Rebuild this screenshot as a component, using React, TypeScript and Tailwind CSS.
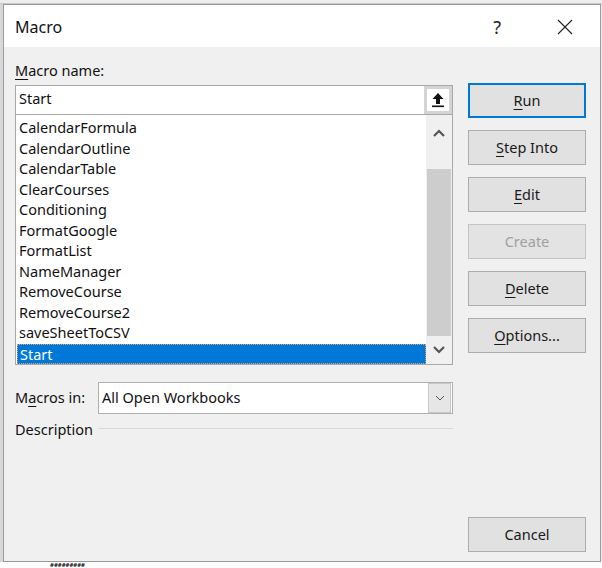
import React from "react";

const items = [
  "CalendarFormula",
  "CalendarOutline",
  "CalendarTable",
  "ClearCourses",
  "Conditioning",
  "FormatGoogle",
  "FormatList",
  "NameManager",
  "RemoveCourse",
  "RemoveCourse2",
  "saveSheetToCSV",
  "Start",
];

const font = { fontFamily: '"Noto Sans", "Open Sans", sans-serif' };

function Btn({ children, primary, disabled }: { children: React.ReactNode; primary?: boolean; disabled?: boolean }) {
  return (
    <div
      className={
        "h-[35px] w-[118px] flex items-center justify-center text-[14.5px] bg-[#e1e1e1] " +
        (primary
          ? "border-2 border-[#0078d7] text-[#1a1a1a]"
          : disabled
          ? "border border-[#c4c4c4] text-[#a0a0a0] bg-[#e3e3e3]"
          : "border border-[#adadad] text-[#1a1a1a]")
      }
    >
      {children}
    </div>
  );
}

function U({ children }: { children: React.ReactNode }) {
  return <span className="underline underline-offset-[3px] decoration-1">{children}</span>;
}

export default function App() {
  return (
    <div className="w-[602px] h-[568px] bg-[#ececec] overflow-hidden flex flex-col" style={font}>
      <div className="h-[4px] shrink-0 bg-[#eeeeee] border-b border-[#c8c8c8]" />
      <div className="flex flex-1 min-h-0">
        <div className="w-[3px] shrink-0 bg-[#d8d8d8]" />
        <div className="w-[598px] h-[558px] border border-[#9a9a9a] bg-[#f0f0f0] flex flex-col shrink-0">
          {/* title bar */}
          <div className="h-[42px] bg-white flex items-center pl-[11px] shrink-0">
            <span className="text-[16px] text-[#111] mt-[2px]">Macro</span>
            <span className="ml-auto text-[18px] text-[#222] mr-[56px] mt-[2px]">?</span>
            <svg width="16" height="16" viewBox="0 0 16 16" className="mr-[27px] mt-[1px]">
              <path d="M1 1 L15 15 M15 1 L1 15" stroke="#222" strokeWidth="1.1" />
            </svg>
          </div>
          {/* body */}
          <div className="flex flex-1 pl-[11px]">
            {/* left column */}
            <div className="w-[438px] flex flex-col">
              <div className="mt-[13px] h-[20px] text-[14.5px] text-[#111] leading-[20px]">
                <U>M</U>acro name:
              </div>
              <div className="mt-[5px] h-[30px] border border-[#a8a8a8] bg-white flex items-center">
                <span className="pl-[3px] text-[14.5px] text-[#111] flex-1 -mt-[2px]">Start</span>
                <div className="w-[28px] h-[28px] bg-[#d4d4d4] flex items-center justify-center">
                  <div className="w-[22px] h-[22px] bg-white flex items-center justify-center">
                    <svg width="14" height="16" viewBox="0 0 14 16">
                      <path d="M7 1 L1.5 7 H5 V12 H9 V7 H12.5 Z" fill="#111" />
                      <rect x="1" y="13.5" width="12" height="1.6" fill="#111" />
                    </svg>
                  </div>
                </div>
              </div>
              {/* list */}
              <div className="h-[251px] -mt-px border border-[#a8a8a8] bg-white flex">
                <div className="flex-1 pt-[3px] pl-px">
                  {items.map((it) =>
                    it === "Start" ? (
                      <div
                        key={it}
                        className="h-[20.5px] bg-[#0078d7] text-white text-[14.5px] leading-[18px] pl-[2px] border border-dotted border-[#e8a070]"
                      >
                        {it}
                      </div>
                    ) : (
                      <div key={it} className="h-[20.5px] text-[14.5px] leading-[19px] text-[#111] pl-[2px]">
                        {it}
                      </div>
                    )
                  )}
                </div>
                <div className="w-[26px] flex flex-col bg-[#f0f0f0]">
                  <div className="h-[34px] flex items-center justify-center pt-[1px]">
                    <svg width="12" height="8" viewBox="0 0 12 8">
                      <path d="M1 7 L6 2 L11 7" stroke="#555" strokeWidth="2.2" fill="none" />
                    </svg>
                  </div>
                  <div className="h-[20px]" />
                  <div className="h-[167px] mx-px bg-[#cdcdcd]" />
                  <div className="flex-1 flex items-center justify-center">
                    <svg width="12" height="8" viewBox="0 0 12 8">
                      <path d="M1 1 L6 6 L11 1" stroke="#555" strokeWidth="2.2" fill="none" />
                    </svg>
                  </div>
                </div>
              </div>
              {/* macros in */}
              <div className="mt-[17px] flex items-center">
                <span className="w-[83px] text-[14.5px] text-[#111]">
                  M<U>a</U>cros in:
                </span>
                <div className="flex-1 h-[32px] border border-[#b0b0b0] bg-white flex items-center">
                  <span className="pl-[3px] text-[14.5px] text-[#111] flex-1">All Open Workbooks</span>
                  <div className="w-[23px] h-[30px] mr-px border border-[#c8c8c8] bg-[#e6e6e6] flex items-center justify-center">
                    <svg width="10" height="6" viewBox="0 0 10 6">
                      <path d="M1 1 L5 5 L9 1" stroke="#555" strokeWidth="1" fill="none" />
                    </svg>
                  </div>
                </div>
              </div>
              <div className="mt-[5px] flex items-center">
                <span className="text-[14.5px] text-[#111]">Description</span>
                <div className="flex-1 ml-[5px] h-px bg-[#d8d8d8] -mt-[2px]" />
              </div>
            </div>
            {/* right column */}
            <div className="ml-[15px] flex flex-col pt-[36px] pb-[9px]">
              <div className="flex flex-col gap-[12px]">
                <Btn primary>
                  <span><U>R</U>un</span>
                </Btn>
                <Btn>
                  <span><U>S</U>tep Into</span>
                </Btn>
                <Btn>
                  <span><U>E</U>dit</span>
                </Btn>
                <Btn disabled>Create</Btn>
                <Btn>
                  <span><U>D</U>elete</span>
                </Btn>
                <Btn>
                  <span><U>O</U>ptions...</span>
                </Btn>
              </div>
              <div className="mt-auto">
                <Btn>Cancel</Btn>
              </div>
            </div>
          </div>
        </div>
      </div>
      <div className="h-[6px] shrink-0 bg-white flex items-center pl-[50px]">
        <span className="text-[6px] leading-[6px] font-bold text-[#111]">#########</span>
      </div>
    </div>
  );
}
